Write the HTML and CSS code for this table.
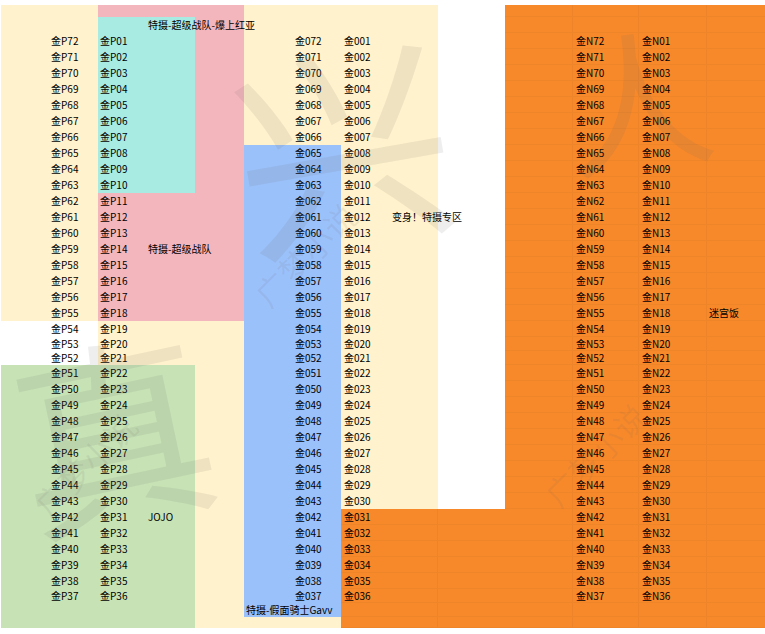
FILE: index.html
```html
<!DOCTYPE html>
<html lang="zh-CN">
<head>
<meta charset="utf-8">
<title>特摄专区</title>
<link rel="stylesheet" href="styles.css">
</head>
<body>
<div class="sheet">
  <div class="blk yellow"></div>
  <div class="blk white-gap"></div>
  <div class="blk pink"></div>
  <div class="blk cyan"></div>
  <div class="blk green"></div>
  <div class="blk blue"></div>
  <div class="blk orange orange-r"><i></i><i></i><i></i><i></i><i></i><i></i><i></i><i></i><i></i><i></i><i></i><i></i><i></i><i></i><i></i><i></i><i></i><i></i><i></i><i></i><i></i><i></i><i></i><i></i><i></i><i></i><i></i><i></i><i></i><i></i><i></i><i></i><i></i><i></i><i></i><i></i><i></i><i></i><i></i><i></i></div>
  <div class="blk orange orange-b"><i></i><i></i><i></i><i></i><i></i><i></i><i></i><i></i></div>

  <div class="lbl t-title">特摄-超级战队-爆上红亚</div>
  <div class="lbl t-sentai">特摄-超级战队</div>
  <div class="lbl t-jojo">JOJO</div>
  <div class="lbl t-henshin">变身！特摄专区</div>
  <div class="lbl t-gavv">特摄-假面骑士Gavv</div>
  <div class="lbl t-dungeon">迷宫饭</div>

  <div class="col c-pd"><span>金P72</span><span>金P71</span><span>金P70</span><span>金P69</span><span>金P68</span><span>金P67</span><span>金P66</span><span>金P65</span><span>金P64</span><span>金P63</span><span>金P62</span><span>金P61</span><span>金P60</span><span>金P59</span><span>金P58</span><span>金P57</span><span>金P56</span><span>金P55</span><span>金P54</span><span>金P53</span><span>金P52</span><span>金P51</span><span>金P50</span><span>金P49</span><span>金P48</span><span>金P47</span><span>金P46</span><span>金P45</span><span>金P44</span><span>金P43</span><span>金P42</span><span>金P41</span><span>金P40</span><span>金P39</span><span>金P38</span><span>金P37</span></div>
  <div class="col c-pa"><span>金P01</span><span>金P02</span><span>金P03</span><span>金P04</span><span>金P05</span><span>金P06</span><span>金P07</span><span>金P08</span><span>金P09</span><span>金P10</span><span>金P11</span><span>金P12</span><span>金P13</span><span>金P14</span><span>金P15</span><span>金P16</span><span>金P17</span><span>金P18</span><span>金P19</span><span>金P20</span><span>金P21</span><span>金P22</span><span>金P23</span><span>金P24</span><span>金P25</span><span>金P26</span><span>金P27</span><span>金P28</span><span>金P29</span><span>金P30</span><span>金P31</span><span>金P32</span><span>金P33</span><span>金P34</span><span>金P35</span><span>金P36</span></div>
  <div class="col c-od"><span>金072</span><span>金071</span><span>金070</span><span>金069</span><span>金068</span><span>金067</span><span>金066</span><span>金065</span><span>金064</span><span>金063</span><span>金062</span><span>金061</span><span>金060</span><span>金059</span><span>金058</span><span>金057</span><span>金056</span><span>金055</span><span>金054</span><span>金053</span><span>金052</span><span>金051</span><span>金050</span><span>金049</span><span>金048</span><span>金047</span><span>金046</span><span>金045</span><span>金044</span><span>金043</span><span>金042</span><span>金041</span><span>金040</span><span>金039</span><span>金038</span><span>金037</span></div>
  <div class="col c-oa"><span>金001</span><span>金002</span><span>金003</span><span>金004</span><span>金005</span><span>金006</span><span>金007</span><span>金008</span><span>金009</span><span>金010</span><span>金011</span><span>金012</span><span>金013</span><span>金014</span><span>金015</span><span>金016</span><span>金017</span><span>金018</span><span>金019</span><span>金020</span><span>金021</span><span>金022</span><span>金023</span><span>金024</span><span>金025</span><span>金026</span><span>金027</span><span>金028</span><span>金029</span><span>金030</span><span>金031</span><span>金032</span><span>金033</span><span>金034</span><span>金035</span><span>金036</span></div>
  <div class="col c-nd"><span>金N72</span><span>金N71</span><span>金N70</span><span>金N69</span><span>金N68</span><span>金N67</span><span>金N66</span><span>金N65</span><span>金N64</span><span>金N63</span><span>金N62</span><span>金N61</span><span>金N60</span><span>金N59</span><span>金N58</span><span>金N57</span><span>金N56</span><span>金N55</span><span>金N54</span><span>金N53</span><span>金N52</span><span>金N51</span><span>金N50</span><span>金N49</span><span>金N48</span><span>金N47</span><span>金N46</span><span>金N45</span><span>金N44</span><span>金N43</span><span>金N42</span><span>金N41</span><span>金N40</span><span>金N39</span><span>金N38</span><span>金N37</span></div>
  <div class="col c-na"><span>金N01</span><span>金N02</span><span>金N03</span><span>金N04</span><span>金N05</span><span>金N06</span><span>金N07</span><span>金N08</span><span>金N09</span><span>金N10</span><span>金N11</span><span>金N12</span><span>金N13</span><span>金N14</span><span>金N15</span><span>金N16</span><span>金N17</span><span>金N18</span><span>金N19</span><span>金N20</span><span>金N21</span><span>金N22</span><span>金N23</span><span>金N24</span><span>金N25</span><span>金N26</span><span>金N27</span><span>金N28</span><span>金N29</span><span>金N30</span><span>金N31</span><span>金N32</span><span>金N33</span><span>金N34</span><span>金N35</span><span>金N36</span></div>

  <div class="wm wm-big wm-1" aria-hidden="true"></div>
  <div class="wm wm-big wm-2" aria-hidden="true"></div>
  <div class="wm wm-big wm-3" aria-hidden="true"></div>
  <div class="wm wm-s wm-s1" aria-hidden="true">广梦小说</div>
  <div class="wm wm-s wm-s2" aria-hidden="true">广梦小说</div>
  <div class="wm wm-s wm-s3" aria-hidden="true">广梦小说</div>
</div>
</body>
</html>
```

FILE: styles.css
```css
html, body {
  margin: 0;
  padding: 0;
  background: #ffffff;
}

body {
  width: 765px;
  height: 634px;
  overflow: hidden;
  font-family: "Noto Sans CJK SC", "Noto Sans", sans-serif;
  font-size: 10px;
  color: #000000;
}

.sheet {
  position: relative;
  margin: 5px 0 0 1px;
  display: grid;
  grid-template-columns: 48px 49px 48px 49px 49px 48px 49px 49px 48px 67px 68px 66px 68px 58px;
  grid-template-rows: 12px 16px repeat(19, 16px) 14px 14px repeat(14, 16px) 14px 14px 11px;
}

.blk { min-width: 0; min-height: 0; }

.yellow { grid-area: 1 / 1 / 41 / 10; background: #fff2cc; }
.white-gap { grid-area: 21 / 1 / 24 / 3; background: #ffffff; }
.pink { grid-area: 1 / 3 / 21 / 6; background: #f4b6bd; }
.cyan { grid-area: 2 / 3 / 13 / 5; background: #a8ebe3; }
.green { grid-area: 24 / 1 / 41 / 5; background: #c7e2b5; }
.blue { grid-area: 10 / 6 / 40 / 8; background: #9bc1fa; }

.orange { background-color: #f8892a; }

.orange-r {
  grid-area: 1 / 11 / 41 / 15;
  display: grid;
  grid-template-rows: subgrid;
  background-image: linear-gradient(90deg,
    transparent 0 67px, #ee8428 67px 68px,
    transparent 68px 133px, #ee8428 133px 134px,
    transparent 134px 201px, #ee8428 201px 202px,
    transparent 202px);
}

.orange-b {
  grid-area: 33 / 8 / 41 / 11;
  display: grid;
  grid-template-rows: subgrid;
  background-image: linear-gradient(90deg,
    transparent 0 96px, #ee8428 96px 97px,
    transparent 97px);
}

.orange i {
  display: block;
  border-bottom: 1px solid #ef8529;
}

.lbl {
  white-space: nowrap;
  padding-left: 2px;
  line-height: 16px;
  z-index: 1;
}

.t-title { grid-area: 2 / 4 / 3 / 5; }
.t-sentai { grid-area: 16 / 4 / 17 / 5; }
.t-jojo { grid-area: 33 / 4 / 34 / 5; }
.t-henshin { grid-area: 14 / 9 / 15 / 10; }
.t-gavv { grid-area: 39 / 6 / 40 / 7; line-height: 14px; }
.t-dungeon { grid-area: 20 / 14 / 21 / 15; }

.col {
  grid-row: 3 / 39;
  display: flex;
  flex-direction: column;
  z-index: 1;
}

.col span {
  display: block;
  height: 16px;
  line-height: 16px;
  padding-left: 2px;
  white-space: nowrap;
}

.col span:nth-child(20),
.col span:nth-child(21),
.col span:nth-child(36) {
  height: 14px;
  line-height: 14px;
}

.c-pd { grid-column: 2 / 3; }
.c-pa { grid-column: 3 / 4; }
.c-od { grid-column: 7 / 8; }
.c-oa { grid-column: 8 / 9; }
.c-nd { grid-column: 12 / 13; }
.c-na { grid-column: 13 / 14; }
.c-od span, .c-oa span, .c-nd span, .c-na span { padding-left: 3px; }

.wm {
  position: absolute;
  pointer-events: none;
  color: rgba(96, 96, 96, 0.11);
  font-family: "Noto Sans CJK SC", sans-serif;
  font-weight: 400;
  line-height: 1.2;
  white-space: nowrap;
  z-index: 2;
}

.wm-1::before { content: "\5174"; }
.wm-2::before { content: "\771F"; }
.wm-3::before { content: "\4EBA"; }

.wm-1 { left: 230px; top: 0; font-size: 220px; transform: rotate(-10deg); }
.wm-2 { left: 10px; top: 300px; font-size: 200px; transform: rotate(-12deg); }
.wm-3 { left: 560px; top: 0; font-size: 150px; transform: rotate(-8deg); }

.wm-s { font-size: 32px; color: rgba(96, 96, 96, 0.09); transform: rotate(-45deg); }
.wm-s1 { left: 240px; top: 230px; }
.wm-s2 { left: 530px; top: 430px; }
.wm-s3 { left: 20px; top: 440px; }
```
